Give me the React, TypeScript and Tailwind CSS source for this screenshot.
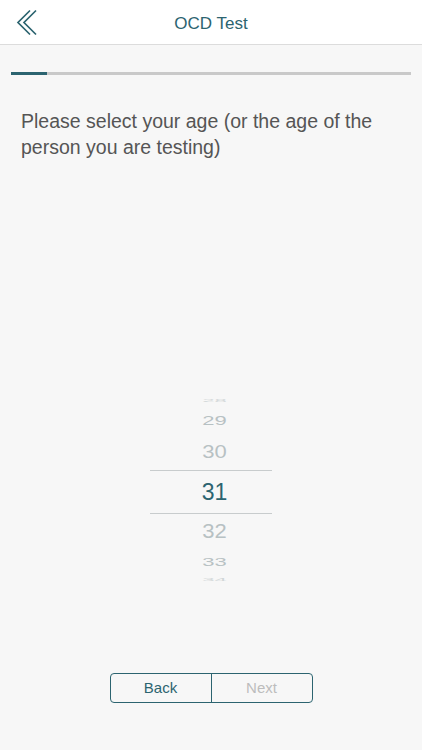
import React from "react";

const TEAL = "#2c6470";

function BackIcon() {
  return (
    <svg width="24" height="28" viewBox="0 0 24 28" fill="none">
      <polyline points="14,1.5 2,13.5 14,25.5" stroke={TEAL} strokeWidth="1.7" />
      <polyline points="20,1.5 8,13.5 20,25.5" stroke={TEAL} strokeWidth="1.7" />
    </svg>
  );
}

export default function App() {
  return (
    <div
      className="flex h-[750px] w-[422px] flex-col bg-[#f7f7f7]"
      style={{ fontFamily: '"Liberation Sans", Arial, sans-serif' }}
    >
      <header className="relative flex h-[45px] items-center justify-center border-b border-[#dcdcdc] bg-white pt-[3px]">
        <button className="absolute left-[16px] top-[9px]">
          <BackIcon />
        </button>
        <h1 className="text-[17px] text-[#2c6470]">OCD Test</h1>
      </header>

      <div className="mx-[11px] mt-[27px] h-[3px] bg-[#c9c9c9]">
        <div className="h-[3px] w-[36px] bg-[#2c6470]" />
      </div>

      <p className="mt-[33px] px-[21px] text-[19.5px] leading-[26px] text-[#555555]">
        Please select your age (or the age of the person you are testing)
      </p>

      <div className="mx-auto mt-[232px] flex w-[122px] flex-col items-center text-[22px] text-[#b7c1c3]">
        <div className="flex h-[16px] items-center pl-[7px]">
          <span className="inline-block scale-y-[0.18] opacity-60">28</span>
        </div>
        <div className="flex h-[24px] items-center pl-[7px]">
          <span className="inline-block scale-y-[0.6]">29</span>
        </div>
        <div className="flex h-[38px] items-center pl-[7px]">
          <span className="inline-block scale-y-[0.85]">30</span>
        </div>
        <div className="flex h-[44px] w-full items-center justify-center border-y border-[#c8cccd] pl-[7px] text-[23px] text-[#2c6470]">
          31
        </div>
        <div className="flex h-[34px] items-center pl-[7px]">
          <span className="inline-block scale-y-[0.9]">32</span>
        </div>
        <div className="flex h-[28px] items-center pl-[7px]">
          <span className="inline-block scale-y-[0.5]">33</span>
        </div>
        <div className="flex h-[6px] items-center pl-[7px]">
          <span className="inline-block scale-y-[0.18] opacity-60">34</span>
        </div>
      </div>

      <div className="mx-auto mt-[91px] flex h-[30px] w-[203px] rounded-[4px] border border-[#2c6470]">
        <button className="flex-1 border-r border-[#2c6470] text-[15px] text-[#2c6470]">Back</button>
        <button className="flex-1 text-[15px] text-[#bdbdbd]">Next</button>
      </div>
    </div>
  );
}
